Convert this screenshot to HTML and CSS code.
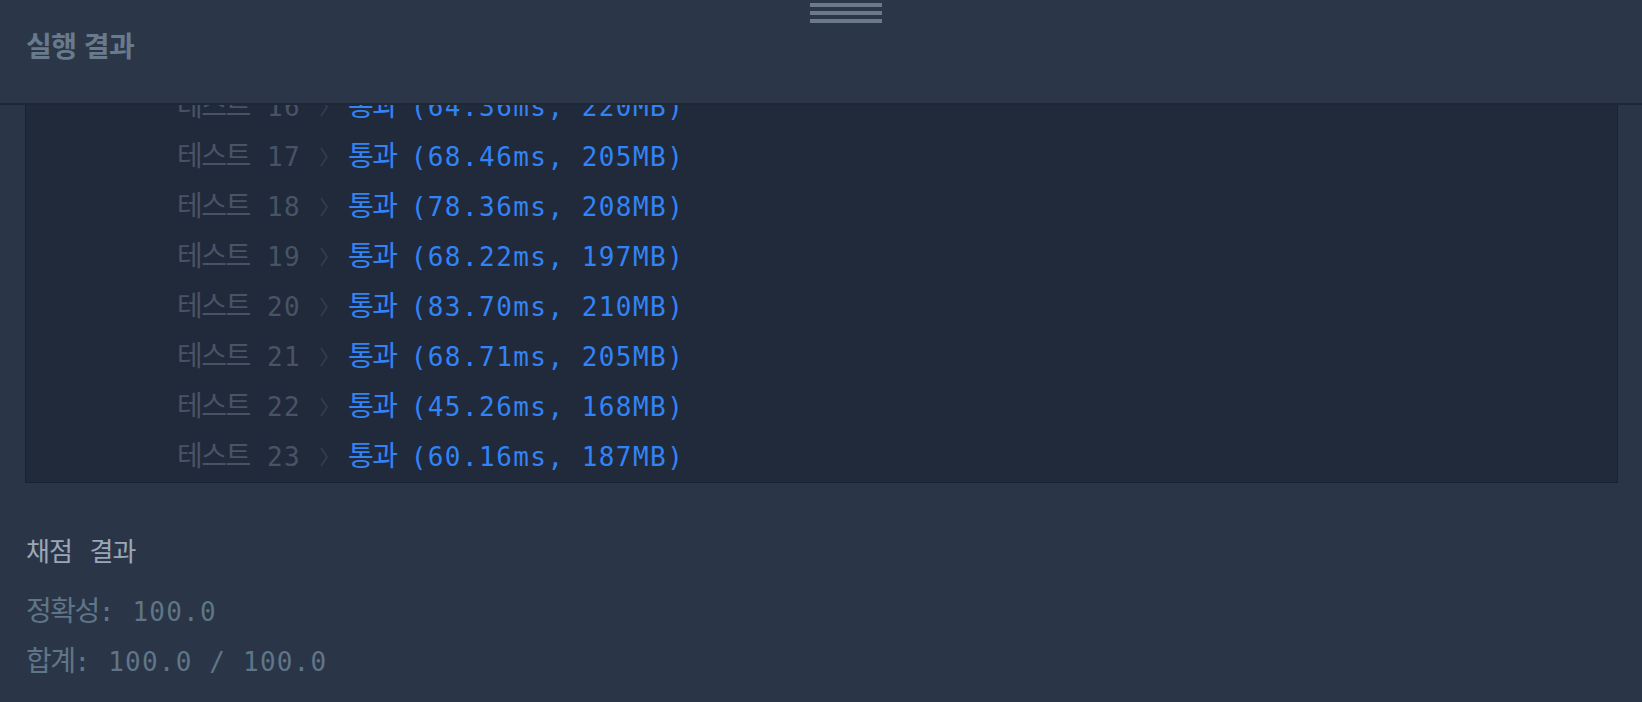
FILE: index.html
```html
<!DOCTYPE html>
<html lang="ko">
<head>
  <meta charset="UTF-8" />
  <meta name="viewport" content="width=device-width, initial-scale=1.0" />
  <title>실행 결과</title>
  <link rel="stylesheet" href="styles.css">
</head>
<body>
  <header class="result-header">
    <div class="handle"><span></span><span></span><span></span></div>
    <h2>실행 결과</h2>
  </header>

  <main class="content">
    <div class="console">
      <ul class="test-list">
        <li><span class="ko">테스트</span> 16<svg class="chevron" viewBox="0 0 8 20"><path d="M1 1 L7 10 L1 19" /></svg><span class="ko pass">통과</span><span class="pass detail">(64.36ms, 220MB)</span></li>
        <li><span class="ko">테스트</span> 17<svg class="chevron" viewBox="0 0 8 20"><path d="M1 1 L7 10 L1 19" /></svg><span class="ko pass">통과</span><span class="pass detail">(68.46ms, 205MB)</span></li>
        <li><span class="ko">테스트</span> 18<svg class="chevron" viewBox="0 0 8 20"><path d="M1 1 L7 10 L1 19" /></svg><span class="ko pass">통과</span><span class="pass detail">(78.36ms, 208MB)</span></li>
        <li><span class="ko">테스트</span> 19<svg class="chevron" viewBox="0 0 8 20"><path d="M1 1 L7 10 L1 19" /></svg><span class="ko pass">통과</span><span class="pass detail">(68.22ms, 197MB)</span></li>
        <li><span class="ko">테스트</span> 20<svg class="chevron" viewBox="0 0 8 20"><path d="M1 1 L7 10 L1 19" /></svg><span class="ko pass">통과</span><span class="pass detail">(83.70ms, 210MB)</span></li>
        <li><span class="ko">테스트</span> 21<svg class="chevron" viewBox="0 0 8 20"><path d="M1 1 L7 10 L1 19" /></svg><span class="ko pass">통과</span><span class="pass detail">(68.71ms, 205MB)</span></li>
        <li><span class="ko">테스트</span> 22<svg class="chevron" viewBox="0 0 8 20"><path d="M1 1 L7 10 L1 19" /></svg><span class="ko pass">통과</span><span class="pass detail">(45.26ms, 168MB)</span></li>
        <li><span class="ko">테스트</span> 23<svg class="chevron" viewBox="0 0 8 20"><path d="M1 1 L7 10 L1 19" /></svg><span class="ko pass">통과</span><span class="pass detail">(60.16ms, 187MB)</span></li>
      </ul>
    </div>

    <section class="grade">
      <h3>채점 결과</h3>
      <p><span class="ko">정확성</span>: 100.0</p>
      <p><span class="ko">합계</span>: 100.0 / 100.0</p>
    </section>
  </main>
</body>
</html>
```

FILE: styles.css
```css
body {
  margin: 0;
  background-color: #2a3647;
  font-family: "DejaVu Sans Mono", "Noto Sans CJK KR", monospace;
}

/* top bar, stays over the scrolled output */
.result-header {
  position: fixed;
  top: 0;
  left: 0;
  right: 0;
  height: 103px;
  padding-left: 26px;
  background-color: #2b3749;
  border-bottom: 2px solid #1e2736;
  display: flex;
  align-items: flex-start;
}
.result-header h2 {
  margin: 31px 0 0;
  font-family: "Noto Sans CJK KR", sans-serif;
  font-size: 28px;
  line-height: 28px;
  font-weight: bold;
  letter-spacing: -0.5px;
  color: #687a8c;
}
.handle {
  position: absolute;
  top: 3px;
  left: 810px;
  width: 72px;
  display: flex;
  flex-direction: column;
  gap: 4px;
}
.handle span {
  height: 4px;
  background-color: #6b7a89;
}

.content {
  padding: 79px 24px 0 25px;
}
.console {
  background-color: #212a3b;
  border: 1px solid #1b2332;
}
.test-list {
  list-style: none;
  margin: 0;
  padding: 0 0 2px;
}
.test-list li {
  height: 48px;
  padding: 2px 0 0 151px;
  line-height: 50px;
  font-size: 26px;
  letter-spacing: 1.45px;
  white-space: nowrap;
  color: #485465;
}
.ko {
  font-family: "Noto Sans CJK KR", sans-serif;
  font-size: 28px;
  line-height: 1;
  letter-spacing: -1.5px;
}
.pass {
  color: #3283f6;
}
.detail {
  margin-left: 14px;
}
.chevron {
  width: 8px;
  height: 20px;
  margin: 0 20px 0 19px;
  vertical-align: -1px;
}
.chevron path {
  fill: none;
  stroke: #343e4e;
  stroke-width: 1.5;
}

.grade {
  padding: 0 1px;
}
.grade h3 {
  margin: 44px 0 10px;
  font-size: 26px;
  line-height: 50px;
  font-weight: normal;
  letter-spacing: -1px;
  word-spacing: 3px;
  color: #9aa7b8;
}
.grade p {
  margin: 0;
  font-size: 26px;
  line-height: 50px;
  letter-spacing: 1.2px;
  color: #607587;
}
```
